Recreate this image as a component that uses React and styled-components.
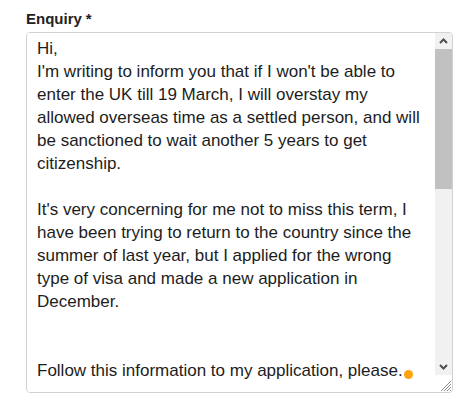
import React, { useState } from "react";
import styled, { createGlobalStyle } from "styled-components";

const GlobalStyle = createGlobalStyle`
  body {
    margin: 0;
    background: #ffffff;
    font-family: "Liberation Sans", Arial, sans-serif;
  }
`;

const Field = styled.div`
  padding: 10px 0 0 26px;
  display: flex;
  flex-direction: column;
  gap: 4px;
  width: 427px;
`;

const Label = styled.label`
  font-size: 15px;
  font-weight: 600;
  color: #222222;
  line-height: 18px;
`;

const Required = styled.span`
  margin-left: 4px;
`;

const Box = styled.div`
  position: relative;
  display: flex;
  height: 361px;
  box-sizing: border-box;
  border: 1px solid #cfd2d6;
  border-radius: 4px;
  overflow: hidden;
`;

const Enquiry = styled.textarea`
  flex: 1;
  min-width: 0;
  box-sizing: border-box;
  padding: 4px 10px;
  border: none;
  font-family: "Liberation Sans", Arial, sans-serif;
  font-size: 17px;
  line-height: 23px;
  color: #1d1d1d;
  resize: none;
  outline: none;
  overflow: hidden;
`;

const Scrollbar = styled.div`
  width: 17px;
  display: flex;
  flex-direction: column;
`;

const ScrollButton = styled.div`
  height: 16px;
  background: #f1f1f1;
  display: flex;
  align-items: center;
  justify-content: center;
`;

const Track = styled.div`
  flex: 1;
  background: #f1f1f1;
`;

const Thumb = styled.div`
  height: 140px;
  background: #c1c1c1;
`;

const Corner = styled.div`
  height: 17px;
  background: #ffffff;
  display: flex;
  align-items: flex-end;
  justify-content: flex-end;
`;

const Dot = styled.span`
  position: absolute;
  left: 377px;
  top: 337px;
  width: 9px;
  height: 9px;
  border-radius: 50%;
  background: #ffa30f;
`;

const initial = `Hi,
I'm writing to inform you that if I won't be able to enter the UK till 19 March, I will overstay my allowed overseas time as a settled person, and will be sanctioned to wait another 5 years to get citizenship.

It's very concerning for me not to miss this term, I have been trying to return to the country since the summer of last year, but I applied for the wrong type of visa and made a new application in December.


Follow this information to my application, please.

My application reference number and passport details are attached to the previous message, together with the documents that were requested by the visa centre.

Thank you in advance for your help.

Kind regards`;

function Chevron({ up }) {
  return (
    <svg width="9" height="6" viewBox="0 0 9 6">
      <path
        d={up ? "M1 5 L4.5 1.5 L8 5" : "M1 1 L4.5 4.5 L8 1"}
        fill="none"
        stroke="#505050"
        strokeWidth="2"
      />
    </svg>
  );
}

export default function App() {
  const [text, setText] = useState(initial);
  return (
    <>
      <GlobalStyle />
      <Field>
        <Label htmlFor="enquiry">
          Enquiry<Required>*</Required>
        </Label>
        <Box>
          <Enquiry
            id="enquiry"
            value={text}
            onChange={(e) => setText(e.target.value)}
          />
          <Scrollbar>
            <ScrollButton>
              <Chevron up />
            </ScrollButton>
            <Track>
              <Thumb />
            </Track>
            <ScrollButton>
              <Chevron />
            </ScrollButton>
            <Corner>
              <svg width="14" height="14" viewBox="0 0 14 14">
                <path
                  d="M13 3 L3 13 M13 6 L6 13 M13 9 L9 13 M13 12 L12 13"
                  stroke="#8a8a8a"
                  strokeWidth="1"
                />
              </svg>
            </Corner>
          </Scrollbar>
          <Dot />
        </Box>
      </Field>
    </>
  );
}
